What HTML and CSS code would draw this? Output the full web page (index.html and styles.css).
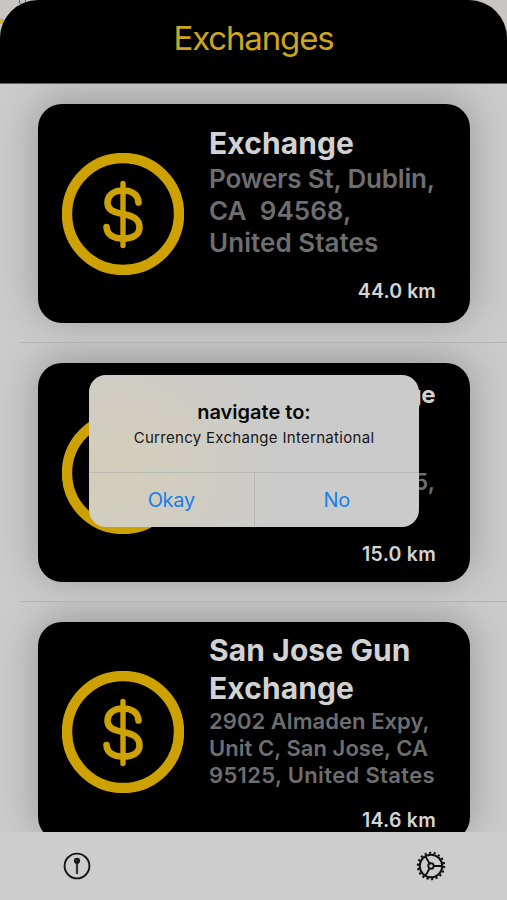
FILE: index.html
```
<!DOCTYPE html>
<html lang="en">
<head>
<meta charset="utf-8">
<title>Exchanges</title>
<link rel="stylesheet" href="styles.css">
</head>
<body>
<svg width="0" height="0" class="defs" aria-hidden="true">
  <symbol id="coin" viewBox="0 0 122 122">
    <g fill="none" stroke="#cda200" stroke-linecap="round">
      <circle cx="61" cy="61" r="56" stroke-width="10.4"/>
      <path stroke-width="5.4" d="M61 30.5V92.5"/>
      <path stroke-width="6.6" d="M76.500 49.500C76 41 69 37.500 61 37.500C51 37.500 45.500 43 45.500 49.500C45.500 57 51 59 61 61C71.500 63 77.500 66 77.500 74.500C77.500 81.500 71 85.500 61 85.500C51 85.500 45 81.500 44.500 74"/>
    </g>
  </symbol>
</svg>
<div class="app">
  <div class="map-peek"><i class="map-label"></i><i class="map-road"></i></div>
  <header class="header"><h1>Exchanges</h1></header>
  <main class="list">
    <section class="row">
      <article class="card">
        <svg class="coin"><use href="#coin"/></svg>
        <div class="info first">
          <h2>Exchange</h2>
          <p class="address"><span class="tight">Powers St, Dublin,</span><br>CA&nbsp; 94568,<br>United States</p>
        </div>
        <span class="distance d1">44.0 km</span>
      </article>
    </section>
    <section class="row">
      <article class="card">
        <svg class="coin"><use href="#coin"/></svg>
        <div class="info second">
          <h2>Currency Exchange</h2>
          <p class="address">95035,</p>
        </div>
        <span class="distance d2">15.0 km</span>
      </article>
    </section>
    <section class="row">
      <article class="card">
        <svg class="coin"><use href="#coin"/></svg>
        <div class="info third">
          <h2>San Jose Gun<br>Exchange</h2>
          <p class="address">2902 Almaden Expy,<br>Unit C, San Jose, CA<br><span class="wide">95125, United States</span></p>
        </div>
        <span class="distance d3">14.6 km</span>
      </article>
    </section>
  </main>
  <nav class="tabs">
    <svg class="tab-icon" viewBox="0 0 30 30">
      <circle cx="15" cy="15" r="12.400" fill="none" stroke="#161616" stroke-width="1.900"/>
      <path d="M15 11V22.200" stroke="#333" stroke-width="2.200" stroke-linecap="round"/>
      <circle cx="15" cy="9.800" r="3.100" fill="#161616"/>
      <circle cx="14.200" cy="9" r=".6" fill="#666"/>
    </svg>
    <svg class="tab-icon" viewBox="0 0 30 30">
      <g fill="none" stroke="#111">
        <circle cx="15" cy="15" r="13.200" stroke-width="2" stroke-dasharray="2.100 2.508"/>
        <circle cx="15" cy="15" r="11.300" stroke-width="2.100"/>
        <circle cx="15" cy="15" r="2.700" stroke-width="1.900"/>
        <path stroke-width="1.900" d="M17.600 15H26M13.700 12.750L9.500 5.400M13.700 17.250L9.500 24.600"/>
      </g>
    </svg>
  </nav>
  <div class="alert" role="dialog">
    <div class="message"><strong>navigate to:</strong><span>Currency Exchange International</span></div>
    <div class="actions"><button>Okay</button><button>No</button></div>
  </div>
</div>
</body>
</html>
```

FILE: styles.css
```
* { box-sizing: border-box; }
body { margin: 0; font-family: Inter, "Liberation Sans", sans-serif; }
h1, h2, p { margin: 0; }
.defs { position: absolute; }
.app {
  position: relative;
  width: 507px;
  height: 900px;
  overflow: hidden;
  display: flex;
  flex-direction: column;
  background: #cbcbcb;
}
.map-peek { position: absolute; inset: 0 0 auto; height: 60px; background: #c9c5c2; }
.map-label { position: absolute; left: 19px; top: -5px; width: 7px; height: 10px; border: 1px solid #666; border-radius: 3px; }
.map-road { position: absolute; left: 0; top: 19px; width: 5px; height: 5px; background: #cfb23a; }
.header {
  position: relative;
  flex: 0 0 84px;
  border-radius: 38px 38px 0 0 / 38px 38px 0 0;
  background: #000;
  border-bottom: 1px solid #666;
  text-align: center;
}
.header h1 { font-size: 33px; line-height: 40px; padding-top: 18px; font-weight: 400; letter-spacing: -1.15px; color: #cda520; }
.list { flex: 0 0 747.500px; overflow: hidden; position: relative; background: #cbcbcb; }
.row { height: 259px; padding: 19.500px 37px 0 38px; overflow: hidden; position: relative; }
.row::after { content: ""; position: absolute; left: 20px; right: 0; bottom: 0; height: 1px; background: #b3b3b3; }
.card {
  position: relative;
  height: 219.500px;
  border-radius: 24px;
  background: #000;
  display: flex;
  align-items: flex-start;
  padding: 0 35px 0 24px;
  box-shadow: 0 -4px 40px rgba(0, 0, 0, .26);
}
.coin { width: 122px; height: 122px; margin-top: 49px; flex: none; }
.info { margin-left: 25px; white-space: nowrap; }
.info h2 { font-size: 30px; line-height: 38px; font-weight: 700; color: #d2d2d2; letter-spacing: .1px; }
.address { font-weight: 600; color: #6e6e70; }
.first { padding-top: 20.500px; }
.first .address { font-size: 26px; line-height: 32px; letter-spacing: .05px; padding-top: 1px; }
.first .tight { letter-spacing: -.18px; }
.second { padding-top: 16px; flex: 1; }
.second h2 { font-size: 24px; line-height: 32px; letter-spacing: -0.5px; text-align: right; }
.second .address { font-size: 23px; line-height: 30px; padding-top: 56px; text-align: right; }
.third { padding-top: 9.500px; }
.third .address { font-size: 22px; line-height: 27px; letter-spacing: .05px; padding-top: 1px; }
.third .wide { letter-spacing: .35px; }
.distance { position: absolute; right: 34px; font-size: 19.500px; line-height: 24px; font-weight: 600; color: #d4d4d4; letter-spacing: .1px; }
.d1 { top: 175.500px; }
.d2 { top: 179.500px; }
.d3 { top: 186.500px; }
.d2, .d3 { letter-spacing: .25px; }
.tabs { flex: 1; position: relative; display: flex; justify-content: space-between; padding: 19.500px 61px 0 62px; background: #cdcdcd; }
.tab-icon { width: 30px; height: 30px; }
.alert {
  position: absolute;
  left: 89px;
  top: 375px;
  width: 330px;
  height: 151.500px;
  border-radius: 17px;
  overflow: hidden;
  background: radial-gradient(ellipse 170px 150px at 20px 95px, #d3cdb9 0, #d1cdc0 40%, #cbcbcb 100%);
  display: flex;
  flex-direction: column;
}
.message { flex: 0 0 97px; padding-top: 24px; display: flex; flex-direction: column; align-items: center; }
.message strong { font-size: 20px; line-height: 26px; font-weight: 600; letter-spacing: 0; color: #080808; }
.message span { font-size: 15px; line-height: 24px; letter-spacing: .3px; color: #171717; padding-top: 1px; }
.actions { flex: 1; display: flex; border-top: 1px solid #b8b8b4; }
.actions button { flex: 1; border: 0; padding: 0; background: none; font: 400 20px Inter, sans-serif; letter-spacing: -0.3px; color: #187ee8; }
.actions button + button { border-left: 1px solid #b8b8b8; }
```
